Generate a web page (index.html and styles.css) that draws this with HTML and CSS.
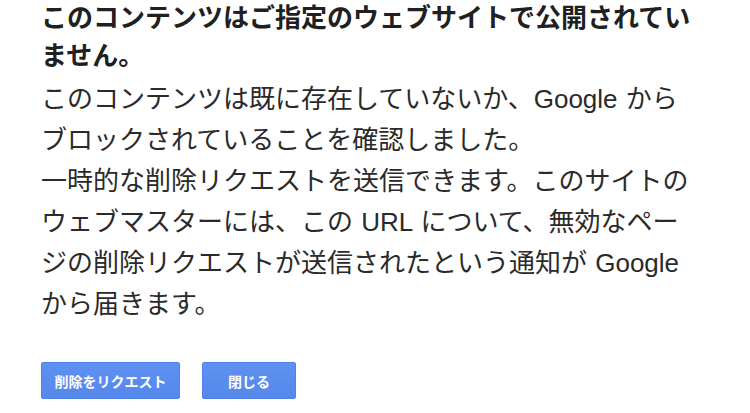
FILE: index.html
```html
<!DOCTYPE html>
<html lang="ja">
<head>
    <meta charset="UTF-8">
    <title>削除をリクエスト</title>
    <link rel="stylesheet" href="styles.css">
</head>
<body>

<div class="dialog">
    <h2 class="dialog-title">このコンテンツはご指定のウェブサイトで公開されていません。</h2>

    <p class="dialog-text">このコンテンツは既に存在していないか、Google からブロックされていることを確認しました。</p>
    <p class="dialog-text">一時的な削除リクエストを送信できます。このサイトのウェブマスターには、この URL について、無効なページの削除リクエストが送信されたという通知が Google から届きます。</p>

    <div class="buttons">
        <button id="requestBtn">削除をリクエスト</button>
        <button id="closeBtn">閉じる</button>
    </div>
</div>

</body>
</html>
```

FILE: styles.css
```css
* {
    box-sizing: border-box;
}

body {
    font-family: 'Liberation Sans', 'Noto Sans CJK JP', Arial, sans-serif;
    margin: 0;
    background-color: #fff;
    color: #222;
}

.dialog {
    width: 698px;
    padding: 0 0 0 41px;
}

.dialog-title {
    margin: 0 0 4px;
    font-size: 26px;
    line-height: 37.5px;
    font-weight: bold;
    color: #202020;
}

.dialog-text {
    margin: 0;
    font-size: 26px;
    line-height: 41px;
    word-spacing: 1px;
    color: #2a2a2a;
}

.buttons {
    display: flex;
    gap: 22px;
    margin-top: 37px;
}

button {
    height: 37px;
    min-width: 94px;
    padding: 0 12.5px;
    font-family: 'Liberation Sans', 'Noto Sans CJK JP', sans-serif;
    font-size: 14px;
    font-weight: bold;
    color: #fff;
    background: linear-gradient(#5e91f2, #5687ea);
    border: 1px solid #4f82e6;
    border-radius: 2px;
    cursor: pointer;
}

button:hover {
    background: #4a7ee4;
}
```
